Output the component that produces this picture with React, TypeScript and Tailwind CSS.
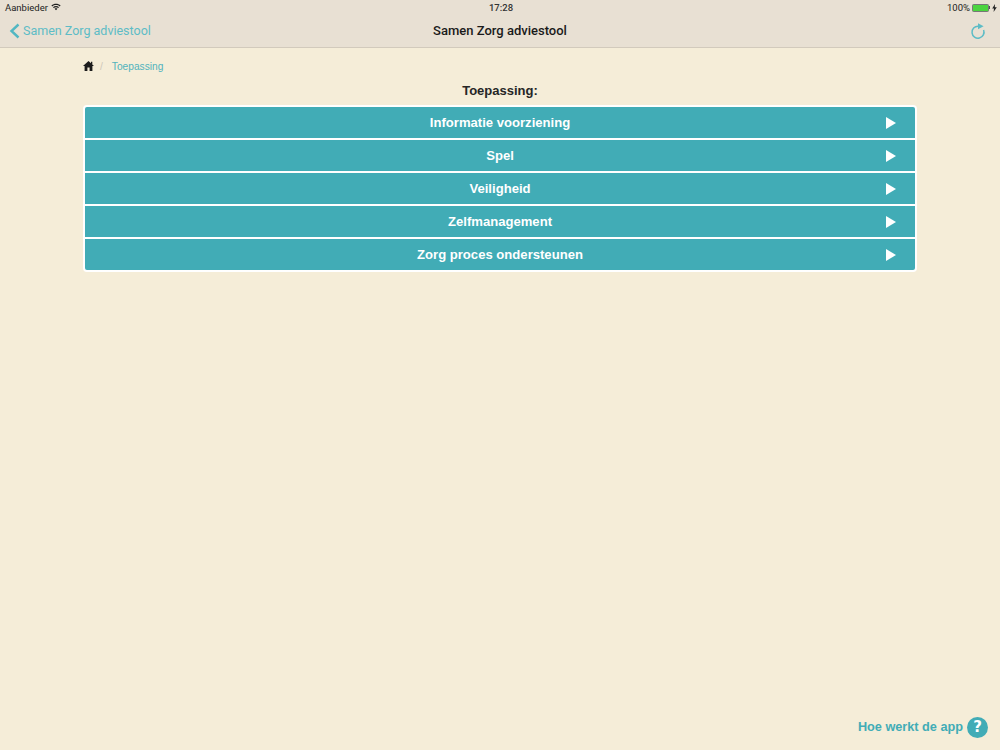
const teal = "#41acb6";

const items = [
  "Informatie voorziening",
  "Spel",
  "Veiligheid",
  "Zelfmanagement",
  "Zorg proces ondersteunen",
];

function Wifi() {
  return (
    <svg width="10" height="8" viewBox="0 0 11 9" className="ml-[3px] mb-[1px]">
      <path d="M0.3 2.9C3.2 0 7.8 0 10.7 2.9L9.7 3.9C7.3 1.7 3.7 1.7 1.3 3.9Z" fill="#222" />
      <path d="M2.1 4.7C3.9 3 7.1 3 8.9 4.7L7.9 5.7C6.5 4.6 4.5 4.6 3.1 5.7Z" fill="#222" />
      <path d="M3.9 6.5C4.8 5.8 6.2 5.8 7.1 6.5L5.5 8.2Z" fill="#222" />
    </svg>
  );
}

function Battery() {
  return (
    <div className="flex items-center">
      <div className="h-[8px] w-[17px] rounded-[1.5px] border border-[#777] bg-[#4cd43f]" />
      <div className="h-[3px] w-[1px] bg-[#555]" />
      <svg width="5" height="8" viewBox="0 0 5 8" className="ml-[2px]">
        <path d="M3 0L0.2 4.5H2L1.6 8L4.8 3.3H2.8Z" fill="#222" />
      </svg>
    </div>
  );
}

export default function App() {
  return (
    <div className="flex h-[750px] w-[1000px] flex-col overflow-hidden bg-[#f5edd8] font-['Liberation_Sans',Arial,sans-serif] text-[#222]">
      <header className="h-[48px] border-b border-[#d2cabc] bg-[#e8e0d3]">
        <div className="grid h-[15px] grid-cols-3 items-center pl-[5px] pr-[3px] font-['Roboto',sans-serif] text-[9.5px] leading-none text-[#222]">
          <div className="flex items-center">
            <span>Aanbieder</span>
            <Wifi />
          </div>
          <div className="text-center font-medium text-[#333]">17:28</div>
          <div className="flex items-center justify-end gap-[2px]">
            <span>100%</span>
            <Battery />
          </div>
        </div>
        <div className="relative flex h-[32px] items-center justify-between pl-[9px] pr-[14px]">
          <div className="flex items-center gap-[3px] font-['Roboto',sans-serif] text-[12.5px] text-[#5dbcc6]">
            <svg width="11" height="16" viewBox="0 0 11 16" fill="none">
              <path d="M9.5 1.5L2.5 8L9.5 14.5" stroke="#52b7c2" strokeWidth="2.4" />
            </svg>
            <span>Samen Zorg adviestool</span>
          </div>
          <div className="absolute inset-x-0 text-center font-['Roboto',sans-serif] text-[13px] font-medium text-[#1a1a1a]">
            Samen Zorg adviestool
          </div>
          <svg width="16" height="18" viewBox="0 0 16 18" fill="none">
            <path d="M8.2 4.2A6 6 0 1 0 13.6 8" stroke="#5dbcc6" strokeWidth="1.5" />
            <path d="M8 1.2L13.6 4.2L8 7.2Z" fill="#5dbcc6" />
          </svg>
        </div>
      </header>

      <main className="mx-auto flex w-[834px] flex-1 flex-col">
        <nav className="flex h-[34px] items-center pt-[3px] text-[10.2px]">
          <svg width="11" height="10" viewBox="0 0 11 10" className="mr-[6px] mb-[2px]">
            <path d="M5.5 0L0 5H1.6V10H4.4V6.6H6.6V10H9.4V5H11L9.3 3.4V0.8H8V2.2Z" fill="#1c1c1c" />
          </svg>
          <span className="text-[#cfc8b8]">/</span>
          <span className="ml-[9px] text-[#52b3bc]">Toepassing</span>
        </nav>
        <h1 className="text-center text-[13px] leading-[18px] font-bold text-[#262626]">Toepassing:</h1>
        <ul className="mt-[5px] flex flex-col gap-[2px] overflow-hidden rounded-[4px] border-2 border-white bg-white">
          {items.map((item) => (
            <li
              key={item}
              className="relative flex h-[31px] items-center justify-center text-[13.1px] font-bold text-white"
              style={{ backgroundColor: teal }}
            >
              {item}
              <svg width="10" height="12" viewBox="0 0 10 12" className="absolute right-[19px] top-[10px]">
                <path d="M0 0L10 6L0 12Z" fill="#fff" />
              </svg>
            </li>
          ))}
        </ul>
      </main>

      <footer className="flex items-center justify-end gap-[4px] pb-[12px] pr-[12px]">
        <span className="text-[12.7px] font-bold text-[#41acb6]">Hoe werkt de app</span>
        <div className="flex h-[21px] w-[21px] items-center justify-center rounded-full bg-[#41acb6] font-['DejaVu_Sans',sans-serif] text-[15px] leading-none font-bold text-white">
          ?
        </div>
      </footer>
    </div>
  );
}
